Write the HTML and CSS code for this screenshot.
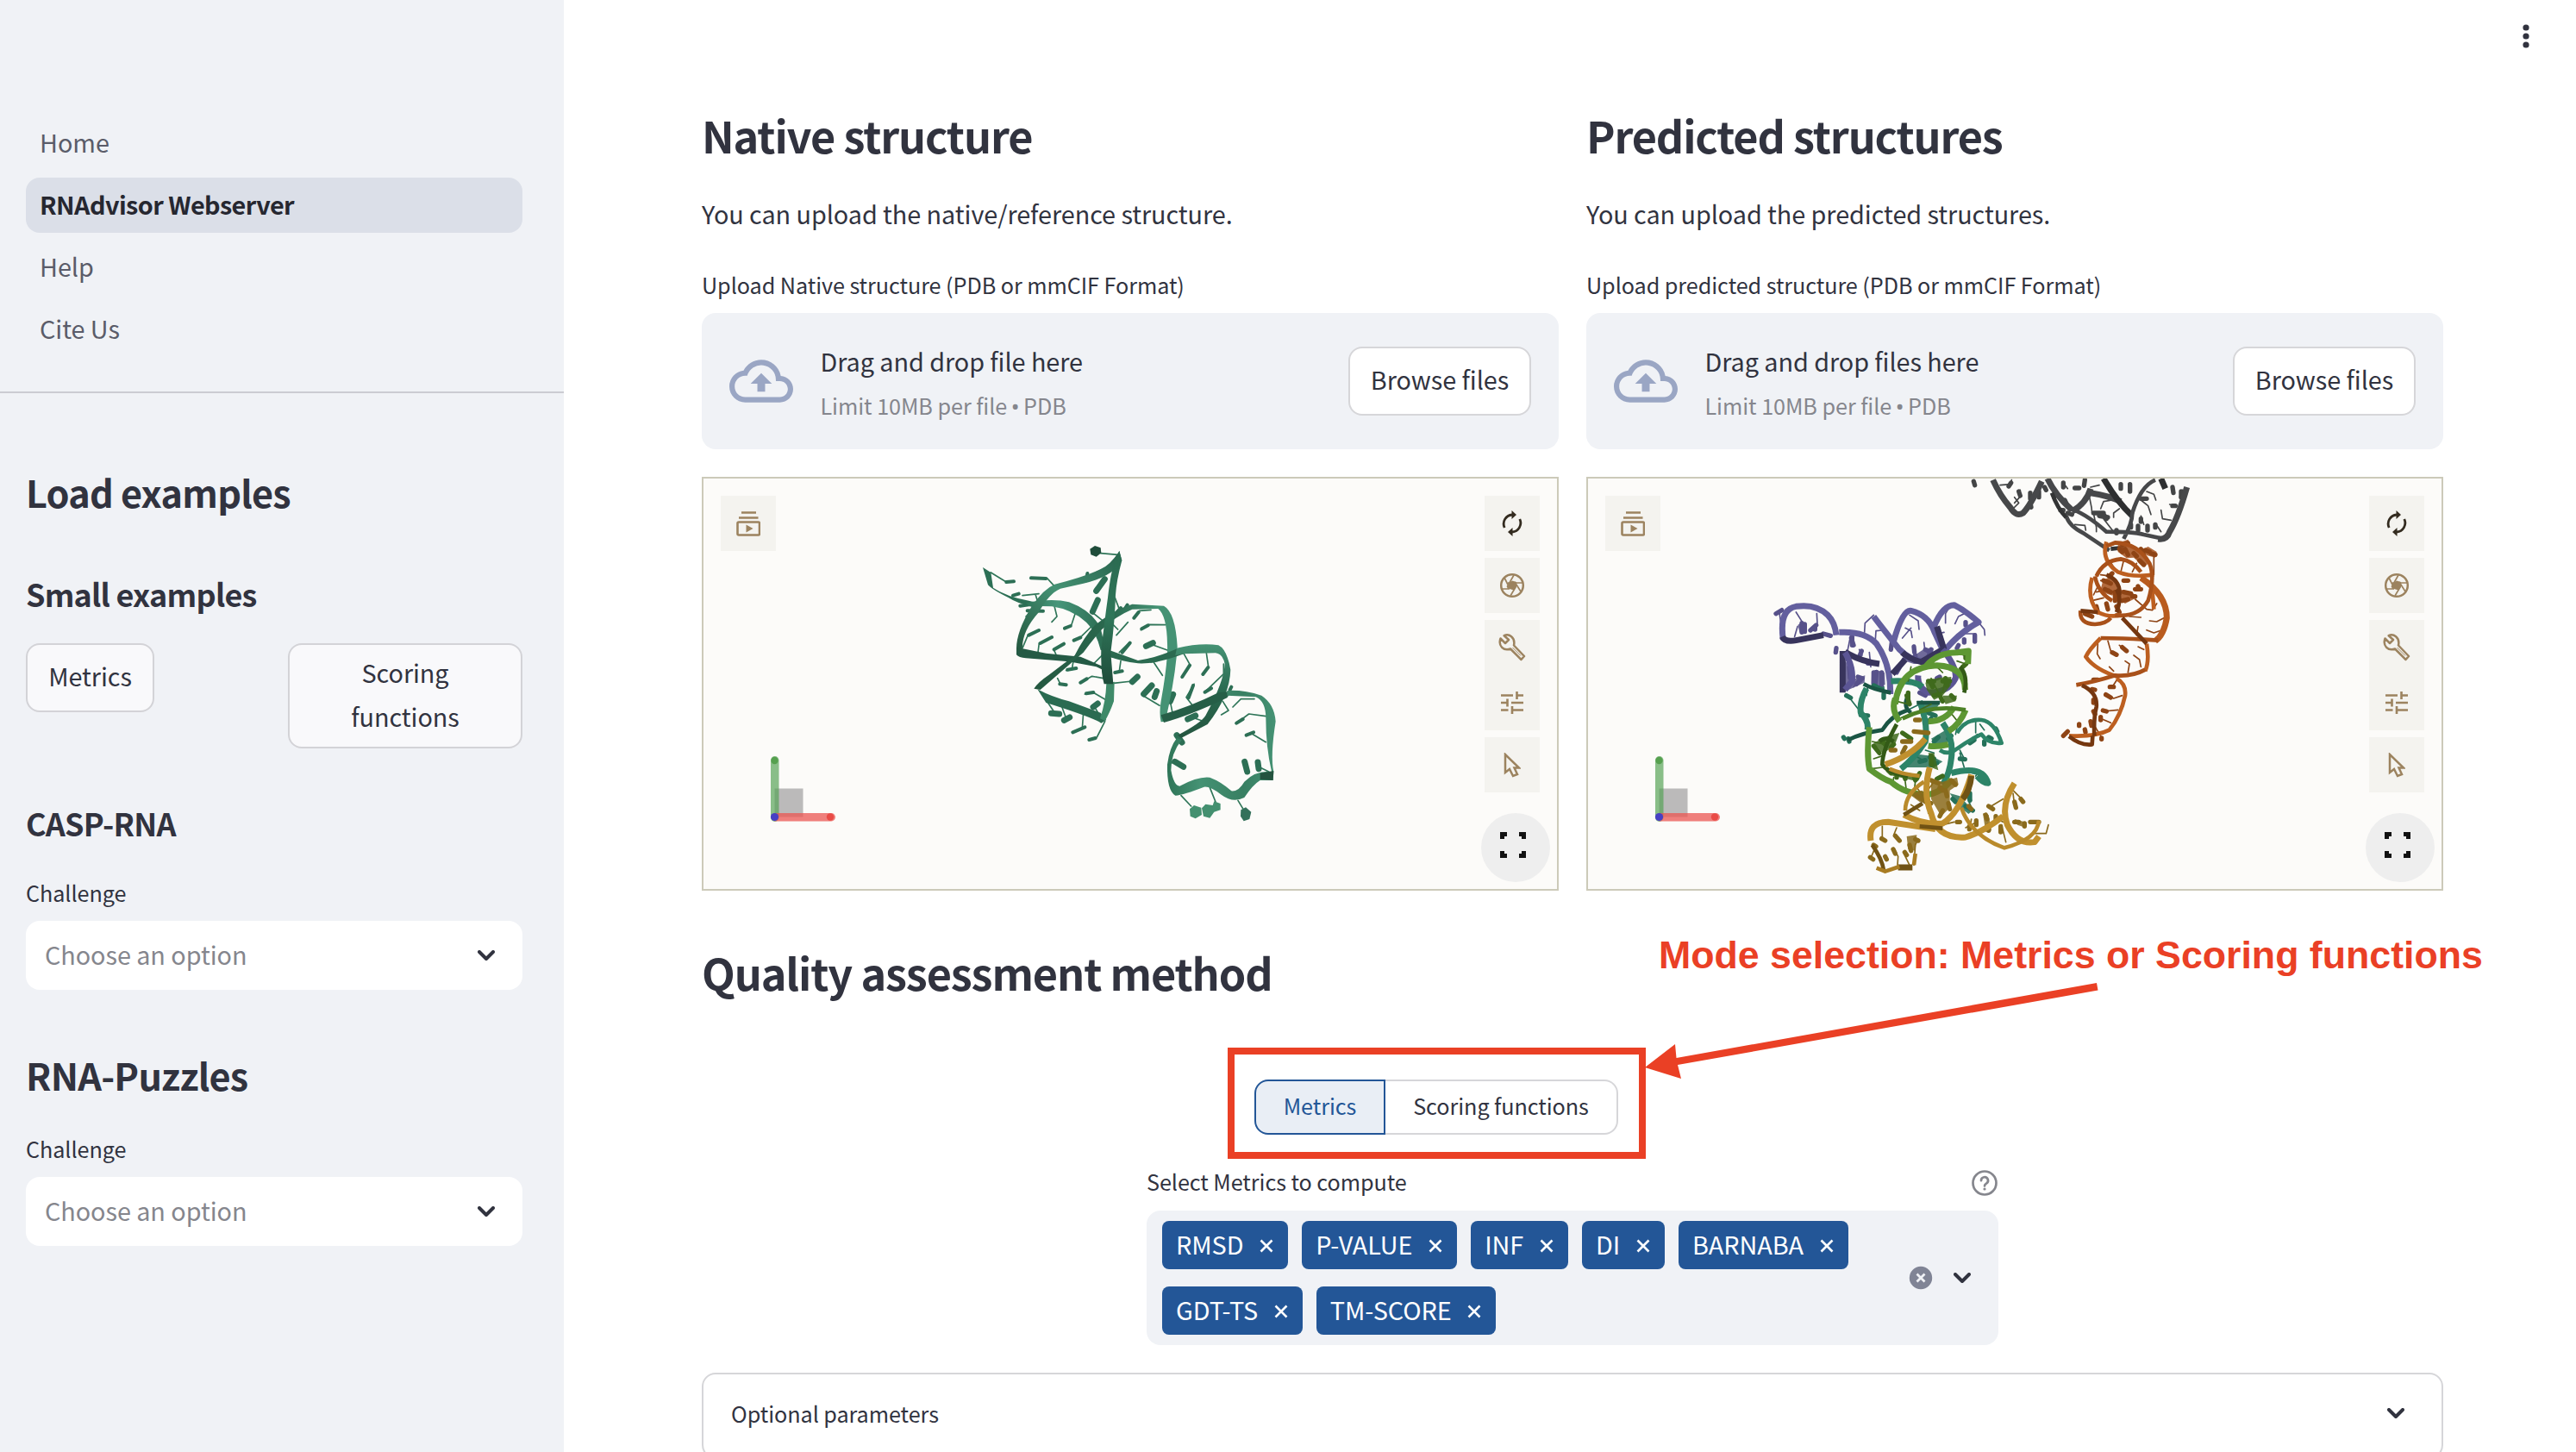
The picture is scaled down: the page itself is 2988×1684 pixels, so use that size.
FILE: index.html
```html
<!DOCTYPE html>
<html lang="en">
<head>
<meta charset="utf-8">
<title>RNAdvisor Webserver</title>
<link rel="stylesheet" href="styles.css">
</head>
<body>
<svg class="defs" width="0" height="0">
  <symbol id="chev" viewBox="0 0 20 12"><path d="M2 2l8 8 8-8" fill="none" stroke="#31333f" stroke-width="4" stroke-linecap="round" stroke-linejoin="round"/></symbol>
  <symbol id="cross" viewBox="0 0 16 16"><path d="M1.5 1.5l13 13M14.5 1.5l-13 13" fill="none" stroke="#fff" stroke-width="2.6"/></symbol>
  <symbol id="cloud" viewBox="0 0 24 16"><path fill="#9aa6c4" d="M19.35 6.04A7.49 7.49 0 0 0 12 0C9.11 0 6.6 1.64 5.35 4.04A5.994 5.994 0 0 0 0 10c0 3.310 2.690 6 6 6h13c2.760 0 5-2.240 5-5 0-2.640-2.050-4.780-4.650-4.960zM19 14H6c-2.210 0-4-1.790-4-4s1.790-4 4-4h.71A5.500 5.500 0 0 1 17.500 7.500V8H19c1.660 0 3 1.340 3 3s-1.340 3-3 3zM8 9h2.550v3h2.900V9H16l-4-4z"/></symbol>
  <symbol id="stack" viewBox="0 0 28 29"><g fill="none" stroke="#9c835f" stroke-width="2.600"><path d="M6 1.500h17M3 7.500h22.500"/><rect x="1.500" y="12.500" width="25.500" height="15" rx="1.500"/></g><path fill="#9c835f" d="M11.500 15.500v9l8-4.500z"/></symbol>
  <symbol id="sync" viewBox="0 0 24 30"><g fill="none" stroke="#332b1f" stroke-width="2.800"><path d="M3.200 20A10.500 10.500 0 0 1 12 5"/><path d="M20.800 10A10.500 10.500 0 0 1 12 25"/></g><path fill="#332b1f" d="M11.500 0v10l5.500-5zM12.500 20v10L7 25z"/></symbol>
  <symbol id="aperture" viewBox="0 0 30 30"><circle cx="15" cy="15" r="12.800" fill="none" stroke="#9c835f" stroke-width="2.500"/><path d="M11 12l4-2.500 5 1.500v6l-3 3.500-5-1.500-2-3z" fill="#9c835f"/><path d="M11 19l-1.500-3L17 3M10 12h17M18 11l7 11M19 17l-6 10M12 19H3M12 18L6 6" fill="none" stroke="#9c835f" stroke-width="1.700"/></symbol>
  <symbol id="wrench" viewBox="0 0 32 32"><path d="M2.500 5.500L8 11l4-4-5.300-4.800C12-.5 20 4 18 13.500L30 26l-3.500 4L14 17.500C6 20.500-.5 14 2.500 5.500z" fill="none" stroke="#9c835f" stroke-width="2.500" stroke-linejoin="round"/><path d="M16.500 16L26 25.500" stroke="#9c835f" stroke-width="1"/></symbol>
  <symbol id="tune" viewBox="0 0 26 26"><path d="M0 4.500h14M18 4.500h8M18.500 0v9M0 13h8M12 13h14M7.500 8.500v9M0 21.500h8.500M13 21.500h13M13 17v9" fill="none" stroke="#9c835f" stroke-width="2.600"/></symbol>
  <symbol id="pointer" viewBox="0 0 20 29"><path d="M2 2v21l5-4 4 8 5-2-3.500-7.500H18z" fill="none" stroke="#9c835f" stroke-width="2.500"/></symbol>
  <symbol id="full" viewBox="0 0 30 30"><path d="M0 0h8v5H5v3H0zM22 0h8v8h-5V5h-3zM0 22h5v3h3v5H0zM25 22h5v8h-8v-5h3z" fill="#111"/></symbol>
  <symbol id="axes" viewBox="0 0 78 78"><rect x="6.500" y="38.500" width="33" height="33" fill="#aaa" fill-opacity=".8"/><rect x="2" y="1" width="9.500" height="76" rx="4.700" fill="#53a052" fill-opacity=".68"/><circle cx="6.500" cy="6" r="4.200" fill="#4e9b45" fill-opacity=".85"/><rect x="3" y="67" width="74" height="9.500" rx="4.700" fill="#eb5552" fill-opacity=".75"/><circle cx="71" cy="71.500" r="4.200" fill="#e94b46"/><circle cx="6.500" cy="71.500" r="4.600" fill="#4740c4"/></symbol>
</svg>
<div class="app">
  <aside class="sidebar">
    <nav class="nav">
      <a class="nav-item">Home</a>
      <a class="nav-item active">RNAdvisor Webserver</a>
      <a class="nav-item">Help</a>
      <a class="nav-item">Cite Us</a>
    </nav>
    <div class="side-body">
      <h2 class="side-h2">Load examples</h2>
      <h3 class="side-h3 small-ex">Small examples</h3>
      <div class="example-buttons">
        <button class="btn">Metrics</button>
        <button class="btn wide">Scoring functions</button>
      </div>
      <h3 class="side-h3 casp">CASP-RNA</h3>
      <div class="label side-label">Challenge</div>
      <div class="select"><span>Choose an option</span><svg class="chev"><use href="#chev"/></svg></div>
      <h2 class="side-h2 puzzles">RNA-Puzzles</h2>
      <div class="label side-label">Challenge</div>
      <div class="select"><span>Choose an option</span><svg class="chev"><use href="#chev"/></svg></div>
    </div>
  </aside>
  <main class="main">
    <div class="columns">
      <section class="col">
        <h1 class="title">Native structure</h1>
        <p class="text">You can upload the native/reference structure.</p>
        <div class="label">Upload Native structure (PDB or mmCIF Format)</div>
        <div class="dropzone">
          <svg class="cloud"><use href="#cloud"/></svg>
          <div class="drop-text"><div class="drop-main">Drag and drop file here</div><div class="drop-sub">Limit 10MB per file <span class="dot">•</span> PDB</div></div>
          <button class="browse">Browse files</button>
        </div>
        <div class="viewer">
          <svg class="scene" viewBox="0 0 990 476">
            <g transform="translate(264 45) scale(.33333)" stroke-linejoin="round" stroke-linecap="round">
              <path class="g-stick" d="M208 192L258 223L290 223M405 213L428 238M363 268L370 290M318 272L375 266M428 305L438 345L420 364M502 333L488 376L463 388M318 455L337 410M372 470L376 438L400 430M438 485L428 462M560 378L525 412M560 330L600 362M650 390L625 365M685 365L645 410M815 374L758 373L730 392M765 322L725 325L705 350M822 462L770 443M655 470L690 435M880 475L902 515L872 558M957 465L965 520L945 548M1018 510V545L950 610M1015 640L1035 672L1010 687M1125 632H1078L1050 660M1165 692L1106 684L1060 718M1165 782L1120 755M840 680L832 640M910 655L888 626L915 580M950 710L915 698M795 655L740 622M635 577L700 570M610 636L565 610L535 615M600 560L560 553L518 577M440 560L450 580M400 635L425 672M452 650L470 700M530 680L526 735M605 710L577 765M572 665L590 695M835 855L850 853M1175 885L1140 868M870 968L905 1005M970 940L990 990M1068 985L1088 1018M590 125L650 130M495 500L490 530L470 533M660 500L655 535M640 280L655 320M775 505L805 550M565 510L595 480M345 330L330 345"/>
              <path class="g-slab" d="M348 211L400 213M262 225L288 223M285 272L305 266M310 308L345 303M335 325L390 326M340 410L375 393M380 438L420 417M428 460L462 440M497 428L520 418M465 386L485 378M540 220L544 195M645 332L660 315M672 322L683 305M733 388L755 376M706 350L722 330M665 470L692 437M874 555L900 515M946 546L964 522M953 608L975 595M1063 716L1085 702M1097 758L1122 748M896 628L912 585M520 575L542 562M540 613L565 609M448 580L470 583M493 748L535 730M550 774L572 768M640 540L665 535M765 500L790 495M475 530L505 525M1045 590L1040 600"/>
              <path class="g-slab big" d="M575 256L604 215M562 328L580 288M748 448L772 437M832 640L842 616M893 702L920 690M740 615L768 585M778 625L785 605M700 572L718 555M418 682L446 684M463 706L482 696M564 660L580 648M855 758L873 783M848 850L878 868M1091 850L1100 885M1137 852L1140 875"/>
              <path fill="#2c6f55" d="M180 174L208 192L216 245Q260 275 340 290L380 300L360 314Q300 300 270 280Q210 250 198 235Z"/>
              <path fill="#245a45" d="M297 452V478Q305 488 330 490L480 502L575 520L600 532L600 520L520 485L400 473Z"/>
              <path fill="url(#gA)" d="M330 298Q420 280 480 295Q560 325 590 385Q600 430 608 465L590 462Q575 400 540 365Q490 320 420 310L340 308Z"/>
              <path fill="url(#gB)" d="M655 118Q620 170 590 180Q540 205 430 233Q390 250 350 310Q295 400 297 462L318 466Q312 400 375 330Q410 265 450 248L530 230Q600 215 640 180L664 150Z"/>
              <path fill="#2a6b51" d="M370 598Q420 625 480 640L590 680L610 705L592 716Q560 695 400 645Z"/>
              <path fill="#3f8a69" d="M638 572L636 640Q620 685 605 708L588 700Q608 640 610 578Z"/>
              <path fill="url(#gC)" d="M500 480Q530 420 570 375Q640 320 700 302L810 308Q850 330 857 450Q850 560 815 710L800 712Q793 680 800 640Q825 500 822 440Q820 340 790 318L700 320Q640 345 592 392Q560 430 530 470L380 600L358 596Q370 575 410 548Z"/>
              <path fill="#2b6a50" d="M620 462L720 498Q780 490 860 455L880 475Q780 512 720 508Q660 500 620 485Z"/>
              <path fill="url(#gD)" d="M855 455Q940 435 1000 445Q1030 460 1042 530Q1040 620 962 720L870 768L858 758Q940 715 955 690Q1020 570 1022 510Q1015 475 990 472L880 475L850 480Z"/>
              <path fill="#265e47" d="M800 688Q900 660 1000 610L1045 605L1030 628Q900 690 810 714Z"/>
              <path fill="url(#gE)" d="M1030 603Q1090 600 1150 620Q1195 650 1199 710Q1180 830 1192 885L1190 915L1145 915Q1120 930 1090 975Q1050 995 1010 965Q970 935 950 938Q880 965 850 968Q820 950 822 860Q830 800 855 768L872 775Q835 820 835 880Q845 935 865 935Q930 900 970 905Q1010 920 1045 952Q1070 955 1090 920Q1130 880 1185 885Q1165 800 1165 700Q1165 640 1130 625L1030 620Z"/>
              <path fill="#24533f" d="M1145 890L1192 882L1190 915L1145 912Z"/>
              <path fill="url(#gF)" d="M655 116L664 150Q645 220 642 270Q640 360 625 470L634 580H602Q590 540 592 460Q605 350 615 280Q625 190 640 150Z"/>
              <path fill="#1f4c3a" d="M553 110L570 99L590 106L592 124L575 137L556 130Z"/>
              <path fill="#449070" d="M900 1015L915 1002L940 1010L942 1035L920 1048L902 1040ZM942 1012L955 998L980 1002L985 988L1007 996V1018L985 1025L970 1046L948 1040Z"/>
              <path fill="#33705a" d="M1078 1018L1095 1009L1114 1025L1108 1050L1088 1057L1077 1040Z"/>
            </g>
            <defs>
              <linearGradient id="gA"><stop offset="0" stop-color="#2f7659"/><stop offset=".4" stop-color="#47967a"/><stop offset="1" stop-color="#2a6a50"/></linearGradient>
              <linearGradient id="gB" x1="1" x2="0" y1="0" y2="1"><stop offset="0" stop-color="#26604a"/><stop offset=".5" stop-color="#459274"/><stop offset="1" stop-color="#24573f"/></linearGradient>
              <linearGradient id="gC"><stop offset="0" stop-color="#24573f"/><stop offset=".55" stop-color="#2b6a50"/><stop offset=".85" stop-color="#459274"/><stop offset="1" stop-color="#459274"/></linearGradient>
              <linearGradient id="gD" x2="0" y2="1"><stop offset="0" stop-color="#459274"/><stop offset=".5" stop-color="#2a6a50"/><stop offset="1" stop-color="#245540"/></linearGradient>
              <linearGradient id="gE"><stop offset="0" stop-color="#2f7558"/><stop offset=".3" stop-color="#459274"/><stop offset=".7" stop-color="#387f62"/><stop offset="1" stop-color="#459274"/></linearGradient>
              <linearGradient id="gF" x2="0" y2="1"><stop offset="0" stop-color="#2a6a50"/><stop offset=".5" stop-color="#2f7659"/><stop offset="1" stop-color="#1f4c3a"/></linearGradient>
            </defs>
            <use href="#axes" x="76" y="321" width="78" height="78"/>
          </svg>
          <div class="vbtn states"><svg width="28" height="29"><use href="#stack"/></svg></div>
          <div class="controls">
            <div class="vbtn"><svg width="24" height="30"><use href="#sync"/></svg></div>
            <div class="vbtn"><svg width="30" height="30"><use href="#aperture"/></svg></div>
            <div class="vgroup"><div class="vbtn"><svg width="32" height="32"><use href="#wrench"/></svg></div><div class="vbtn"><svg width="26" height="26"><use href="#tune"/></svg></div></div>
            <div class="vbtn"><svg width="20" height="29"><use href="#pointer"/></svg></div>
          </div>
          <div class="fullscreen"><svg width="30" height="30"><use href="#full"/></svg></div>
        </div>
      </section>
      <section class="col">
        <h1 class="title">Predicted structures</h1>
        <p class="text">You can upload the predicted structures.</p>
        <div class="label">Upload predicted structure (PDB or mmCIF Format)</div>
        <div class="dropzone">
          <svg class="cloud"><use href="#cloud"/></svg>
          <div class="drop-text"><div class="drop-main">Drag and drop files here</div><div class="drop-sub">Limit 10MB per file <span class="dot">•</span> PDB</div></div>
          <button class="browse">Browse files</button>
        </div>
        <div class="viewer">
          <svg class="scene" viewBox="0 0 990 476">
            <g class="mol" transform="translate(198 -15) scale(.33333)">
              <!-- purple chain -->
              <g stroke="#57518a">
                <path class="blob" fill="#57518a" d="M300 680L328 705L325 745L370 730L368 755L335 770L300 785ZM393 725L410 712L438 720L440 762L415 770L392 760ZM470 735L505 670L550 655L580 635L608 635L600 690L540 690L510 680ZM136 555L150 543L165 560L158 585L142 580Z"/>
                <path class="thin" d="M72 512L78 555M130 510L152 545M202 515L204 550M125 595L135 560M368 580L370 548L400 520M405 620L408 575L430 573M500 600L530 565M525 520L555 540L558 570M510 565L530 575L534 598M650 548V515L665 490M683 550L695 525L715 515M765 545L785 570L787 590M715 585L755 585M752 590V615M540 625L545 650M575 615L578 640M620 585L645 580M320 590L310 640M350 640L360 660M390 700L385 650M555 770L560 740M330 770L345 745"/>
                <path class="slab" d="M60 515L80 503M150 548V580M160 552V578M180 573L200 555M196 560V570M225 585L250 592M270 635L268 650M325 595V625M322 600L330 625M358 645L350 665M380 688H395M400 720V760M410 718L405 765M428 720V765M345 735L360 740M340 760L355 745M315 700L318 740M465 600L460 640M480 720L505 675M545 660V680M600 640L590 665M580 640L600 650M720 545V555M690 635L695 625M715 605V615M752 590V612M560 790L580 800M620 740L630 735M540 630L542 650"/>
                <path class="rib" stroke="#635f9e" d="M85 605Q70 500 130 490Q200 480 240 520Q265 545 270 590M280 580Q370 575 410 620Q460 690 458 795M400 525Q430 565 490 640Q530 680 570 680M470 610Q500 500 530 505Q590 520 610 575L640 640M610 560Q640 485 680 485Q720 505 765 545Q700 580 650 640"/>
                <path class="rib" stroke="#38345c" d="M82 595Q90 615 130 608L225 590M292 645V790M300 648Q350 680 420 690M465 725L510 675M570 680L640 640M620 560L645 640M600 690Q530 680 500 650"/>
                <path class="rib" stroke="#5b5594" d="M640 640Q690 700 685 740Q660 790 590 790Q550 770 555 730M300 650Q330 700 325 750L300 780"/>
              </g>
              <!-- teal chain -->
              <g stroke="#247058">
                <path class="blob" fill="#247058" d="M495 1050L560 1005L600 1010L640 1030L610 1050L550 1050ZM548 820L635 820L615 850L580 860ZM600 950L650 920L665 960L620 975ZM665 1140L700 1150L745 1200L730 1212L690 1180Z"/>
                <path class="thin" d="M310 800L345 845M435 770V800M380 765L375 800M520 850L560 830M690 910L685 935M755 890V930M770 900L785 920M740 965L760 935M785 960L800 945M700 990L715 1020M700 1000L715 1050M770 1060L755 1080M545 1010L580 1030M610 1000L580 990M720 1140L740 1190M735 1145L740 1165"/>
                <path class="slab" d="M305 800L320 808M435 795V808M355 868L380 870M295 945L298 950M315 960L312 950M400 765L430 780M735 965L750 955M785 960V970M800 945L810 950M825 915L830 925M700 1020L718 1022M595 1015L610 1020M560 1030L580 1025M600 1040L620 1035M720 1185L745 1200M675 1160L685 1170M735 1140V1165M610 960L625 945M590 860L615 870M580 900L600 880M660 950L670 940"/>
                <path class="rib" stroke="#2d8468" d="M460 750Q540 745 570 770M375 775Q350 820 355 860Q385 890 378 920M560 820Q590 900 580 960Q540 1020 495 1055M640 895Q680 950 670 1020Q665 1070 640 1110M670 1070Q780 1040 798 1105Q780 1105 760 1080"/>
                <path class="rib narrow" stroke="#2d8468" d="M690 930Q720 880 775 885Q820 890 845 965Q800 970 775 935Q740 950 690 985Q660 1010 630 990"/>
                <path class="rib narrow" stroke="#1b5544" d="M365 760Q400 780 460 790M310 955Q360 930 430 920Q460 870 520 850M550 825H630M520 800Q500 840 530 860"/>
              </g>
              <!-- green chain -->
              <g stroke="#3f6a1c">
                <path class="blob" fill="#3f6a1c" d="M580 755L625 738L670 735L668 765L640 800L610 815L585 780ZM400 965L450 940L490 930L470 980L430 1000ZM640 800L690 800L685 820L650 830ZM445 1055L510 1068L565 1075L550 1098L460 1078ZM590 1000L610 1000L625 1060L600 1050Z"/>
                <path class="thin" d="M680 650L715 660M720 690L690 680M600 740L625 790M650 740L640 790M480 820L520 830M490 880L540 860M395 960L440 970M400 1020L430 1010M390 1055L430 1050M510 1100L515 1140M470 1085L465 1110M700 900L660 850M545 1100L540 1140M560 850L600 830M530 700L520 750M620 700L640 720"/>
                <path class="slab" d="M720 655V670M722 690L710 700M590 750H610M600 760L605 770M640 750H665M650 740L655 765M610 800L630 795M630 800L640 820M670 800L680 810M520 790V820M515 800L525 830M420 1000L400 975M430 960L440 970M450 1060L460 1070M480 1070V1085M505 1075L510 1090M540 1080L545 1095M560 1070L550 1090M600 1010V1040M460 980L470 970M640 1080L620 1090M500 930L530 950M670 1100L650 1110"/>
                <path class="rib" stroke="#5d9733" d="M580 700Q620 650 690 650L730 645L728 690M475 830Q490 700 620 695Q720 700 718 780M720 850Q700 900 660 925M490 890Q460 850 475 810M385 910Q375 1000 385 1055Q430 1090 460 1100Q510 1145 590 1145Q650 1130 670 1090M660 970Q620 980 590 975M590 890Q650 890 680 840"/>
                <path class="rib narrow" stroke="#4d8127" d="M500 880Q600 830 720 850"/>
                <path class="rib narrow" stroke="#335a17" d="M480 900Q430 990 430 1040Q450 1070 520 1080M470 960Q440 940 420 960M700 700Q730 730 715 790"/>
              </g>
              <!-- gold chain -->
              <g stroke="#8a6a1c">
                <path class="blob" fill="#8a6a1c" d="M600 1090L640 1100L690 1085L695 1110L665 1130L665 1190L635 1220L600 1160ZM520 1140L570 1130L600 1180L560 1170ZM515 1290L550 1285L545 1340L520 1335ZM780 1210L800 1215L810 1270L790 1275ZM890 1230L925 1240L930 1260L900 1250Z"/>
                <path class="thin" d="M430 1255V1300M480 1260L470 1285L490 1305M470 1330L485 1360L483 1390M505 1350L525 1390M390 1365L405 1330M540 1390L545 1320L555 1300M800 1190L850 1160M885 1130L915 1160M885 1140L890 1180M845 1250L860 1310M680 1240L640 1250M735 1260L740 1230M760 1240L720 1260M960 1280L1000 1280L1008 1250M830 1230L850 1240M550 1120L600 1190M530 1180L560 1200M590 1160L590 1210M610 1100L580 1140"/>
                <path class="slab" d="M428 1298L440 1305M475 1288L490 1305M468 1335L475 1350M440 1360L445 1370M400 1320L408 1325M388 1363L398 1370M508 1345L515 1355M525 1320L530 1340M545 1300L555 1305M800 1185L815 1195M912 1160L920 1170M890 1170L895 1190M842 1255V1275M690 1240H700M733 1255V1265M757 1235V1250M790 1215L795 1230M800 1250V1270M825 1220V1230M890 1240H905M925 1245V1255M945 1240H975M600 1095L625 1105M630 1120L640 1130M670 1095L685 1110M650 1130L655 1150M730 1185L740 1195M660 1175L665 1195M580 1170L600 1175M550 1150L575 1165M640 1200L630 1220M460 990H475M500 960H530M540 925L590 930M545 885H560M500 1000L510 980"/>
                <path class="rib" stroke="#c0902e" d="M440 1040Q530 1010 580 950M390 1305Q380 1240 450 1240Q550 1255 615 1265M505 1215Q570 1250 640 1245Q700 1210 740 1075M595 1050Q570 1140 600 1210Q620 1300 720 1293Q780 1275 850 1220M890 1105Q840 1180 865 1250Q900 1320 960 1310L975 1290"/>
                <path class="rib narrow" stroke="#b98a2b" d="M510 1200Q510 1140 575 1100M455 1055Q500 1075 560 1080M705 1190Q740 1290 855 1330Q970 1300 975 1235"/>
                <path class="rib" stroke="#705214" d="M485 1398H535M740 1080Q735 1130 710 1160"/>
                <path class="rib narrow" stroke="#705214" d="M395 1320Q430 1370 435 1408M560 1255L640 1262M505 1215L570 1175"/>
                <path class="rib narrow" stroke="#a97c22" d="M410 1400L440 1412L490 1395M540 1390L545 1350"/>
              </g>
            </g>
            <g class="mol" transform="translate(498 -15) scale(.33333)">
              <!-- grey chain -->
              <g stroke="#444546">
                <path class="thin" d="M-60 68L-24 65L-20 50M-10 110L5 130L-15 150M10 85L8 110L-10 130M160 60L175 80M255 75L285 68M250 105L258 145L260 165M290 150L300 125L330 120M335 180V165L355 150M265 165L275 215L275 230M300 185L335 230M430 120L455 140L465 170M450 90L475 100L482 120M500 155L505 185L535 190M575 85L565 110M530 135L555 140M480 200L500 230M430 175L440 205M200 205L235 208L238 225"/>
                <path class="slab" d="M-152 55L-148 68M-30 72L-22 60M5 90L10 105M45 95V115M75 90V110M45 130L48 145M100 85L95 75M130 95L128 110M160 60V75M200 78H215M235 50L232 70M360 65V80M392 65V90M265 165H300M285 175L315 180M300 168L310 185M430 115H450M420 210V225M453 210V225M480 205V215M430 185V195M395 205V215M150 155H160M175 165L190 170M165 120L170 130M540 75L543 95M570 90V110M345 225V235M540 140H550"/>
                <path class="rib" stroke="#47484a" d="M-85 50Q-60 105 -25 145Q-5 180 20 165Q45 140 85 55M105 45Q130 100 190 155M190 160Q240 130 255 80M255 95Q320 105 360 125M590 75Q560 180 530 230Q520 260 490 255"/>
                <path class="rib" stroke="#2e2f30" d="M300 45Q350 130 400 175M500 45L515 80"/>
                <path class="rib narrow" stroke="#47484a" d="M370 255Q400 200 400 165Q430 70 480 50M170 175Q180 210 230 235L320 295M180 150Q230 160 310 230Q400 230 440 240L510 255"/>
                <path class="rib narrow" stroke="#333435" d="M120 95Q140 150 170 180M325 290L370 285"/>
              </g>
              <!-- orange chain -->
              <g stroke="#8e4415">
                <path class="blob" fill="#a34f1b" d="M350 270L385 257L400 285L440 295L458 340L440 352L405 320L380 322L350 300ZM437 290L455 282L485 300L480 320L450 312ZM298 400L325 385L340 400L350 435L330 452L288 438ZM360 432L400 440L415 460L375 480L352 465Z"/>
                <path class="thin" d="M320 280L350 270M360 370L370 330M400 370L415 340M340 360L320 330M330 385L290 380M475 380V310M280 420L265 450M300 460L260 470M410 465L450 500L470 503L485 480M390 525L430 528M460 540L485 543L510 530M450 572L475 582L510 570M315 610L325 645L345 660M280 620L278 655L288 672M355 625L380 645M420 630L440 640M405 660L425 675L430 700M375 680L390 690L385 720M320 700L335 715M350 740L330 770M305 795L335 810L365 800M300 855L350 850M290 880L325 895M265 900L290 940M415 590L420 560M290 400H320M275 440L320 430"/>
                <path class="slab" d="M365 275L385 270M375 290L385 310M405 305L415 315M430 290L440 310M425 330L440 345M445 295L460 300M465 305L480 310M370 400H385M410 430L430 430M420 420L425 430M300 400L325 410M305 430L325 440M370 440L395 445M400 455H410M340 440V470M345 490L355 510M310 480L315 500M275 490L280 510M235 515L260 525M330 650L345 658M365 632L380 645M322 770H335M308 797L325 807M265 745H280M260 778L270 780M265 815V825M265 855L270 865M298 852L310 855M290 875V885M255 890L258 905M215 900V905M235 918L237 928M293 948V952M160 940L175 925M355 290L365 300M320 385L330 375M365 470L385 465"/>
                <path class="rib narrow" stroke="#bd5f20" d="M310 265Q290 330 350 370Q400 390 475 380M260 390Q240 460 280 510Q320 530 360 520M475 500Q470 420 460 400M290 600Q250 640 238 665Q270 710 350 735M450 620Q460 680 445 715M345 740Q380 760 375 800Q360 870 320 920Q270 945 180 940"/>
                <path class="rib" stroke="#b95c1f" d="M430 390Q520 450 520 530Q510 590 480 610"/>
                <path class="rib narrow" stroke="#a9511a" d="M270 385Q280 440 330 470M220 505Q215 550 270 552Q310 550 325 530M340 520Q420 530 455 470Q480 390 460 340Q420 270 340 268L310 280M275 385Q300 330 360 325Q400 330 430 370M205 763Q260 755 340 730Q400 735 445 710M290 600Q370 600 440 605L490 608"/>
                <path class="rib narrow" stroke="#753710" d="M365 530L450 620M220 505L280 510M345 430Q365 460 345 510M310 380Q360 400 355 450M225 765Q280 790 275 840Q265 880 268 940M180 942Q220 975 260 970L262 940"/>
              </g>
            </g>
            <use href="#axes" x="76" y="321" width="78" height="78"/>
          </svg>
          <div class="vbtn states"><svg width="28" height="29"><use href="#stack"/></svg></div>
          <div class="controls">
            <div class="vbtn"><svg width="24" height="30"><use href="#sync"/></svg></div>
            <div class="vbtn"><svg width="30" height="30"><use href="#aperture"/></svg></div>
            <div class="vgroup"><div class="vbtn"><svg width="32" height="32"><use href="#wrench"/></svg></div><div class="vbtn"><svg width="26" height="26"><use href="#tune"/></svg></div></div>
            <div class="vbtn"><svg width="20" height="29"><use href="#pointer"/></svg></div>
          </div>
          <div class="fullscreen"><svg width="30" height="30"><use href="#full"/></svg></div>
        </div>
      </section>
    </div>
    <h1 class="title quality">Quality assessment method</h1>
    <div class="method">
      <div class="segmented"><button class="seg on">Metrics</button><button class="seg">Scoring functions</button></div>
      <div class="metric-label"><span class="label">Select Metrics to compute</span>
        <svg class="help" width="32" height="32" viewBox="0 0 32 32"><g fill="none" stroke="#85868d" stroke-width="2.700"><circle cx="16" cy="16" r="13.500"/><path d="M12 13.200a4 4 0 1 1 6 3.400c-1.500.9-2 1.500-2 2.900" stroke-linecap="round"/></g><circle cx="16" cy="23" r="1.600" fill="#85868d"/></svg>
      </div>
      <div class="multiselect">
        <div class="tags">
          <span class="tag">RMSD<svg><use href="#cross"/></svg></span><span class="tag">P-VALUE<svg><use href="#cross"/></svg></span><span class="tag">INF<svg><use href="#cross"/></svg></span><span class="tag">DI<svg><use href="#cross"/></svg></span><span class="tag">BARNABA<svg><use href="#cross"/></svg></span><span class="tag">GDT-TS<svg><use href="#cross"/></svg></span><span class="tag">TM-SCORE<svg><use href="#cross"/></svg></span>
        </div>
        <div class="ms-icons">
          <svg width="28" height="28" viewBox="0 0 28 28"><circle cx="14" cy="14" r="13.200" fill="#808495"/><path d="M9.500 9.500l9 9M18.500 9.500l-9 9" stroke="#f0f2f6" stroke-width="2.800"/></svg>
          <svg class="chev"><use href="#chev"/></svg>
        </div>
      </div>
    </div>
    <div class="expander"><span>Optional parameters</span><svg class="chev"><use href="#chev"/></svg></div>
  </main>
  <svg class="kebab" width="8" height="28" viewBox="0 0 8 28" fill="#31333f"><circle cx="4" cy="4" r="3.600"/><circle cx="4" cy="14" r="3.600"/><circle cx="4" cy="24" r="3.600"/></svg>
  <div class="callout-box"></div>
  <svg class="callout-arrow" width="530" height="120" viewBox="0 0 530 120" fill="#ea4025"><path d="M3 98L38 71L39.500 87L527 0L528.500 8.500L41 95L45 111Z"/></svg>
  <div class="callout-text">Mode selection: Metrics or Scoring functions</div>
</div>
</body>
</html>
```
FILE: styles.css
```css
* { box-sizing: border-box; }
body { margin: 0; background: #fff; color: #31333f; font-family: "Noto Sans CJK SC", "Noto Sans", sans-serif; font-size: 28.8px; letter-spacing: -.06px; }
h1, h2, h3, p { margin: 0; font-weight: 700; letter-spacing: -.022em; }
button { font: inherit; letter-spacing: inherit; color: inherit; margin: 0; padding: 0; }
svg { display: block; flex: none; }
.defs { position: absolute; }
.app { position: relative; display: flex; width: 2988px; height: 1684px; overflow: hidden; }

.sidebar { width: 654px; flex: none; background: #f0f2f6; }
.nav { padding: 134px 48px 40px 30px; border-bottom: 2px solid #cbccd2; display: flex; flex-direction: column; gap: 8px; }
.nav-item { height: 64px; padding-left: 16px; border-radius: 16px; line-height: 61px; color: #5a5c69; white-space: nowrap; }
.nav-item.active { background: #dbdfe8; color: #262730; font-weight: 700; letter-spacing: -.02em; }
.side-body { padding: 84px 48px 0 30px; }
.side-h2 { font-size: 43.2px; line-height: 60px; letter-spacing: -.018em; }
.side-h3 { font-size: 36px; line-height: 50px; }
.small-ex { margin-top: 63px; }
.example-buttons { display: flex; justify-content: space-between; align-items: flex-start; margin-top: 33px; height: 122px; }
.btn { width: 149px; height: 80px; background: #f9f9fb; border: 2px solid #d3d3d7; border-radius: 16px; line-height: 51px; padding-bottom: 5px; }
.btn.wide { width: 272px; height: 122px; padding: 0 60px 5px; }
.casp { margin-top: 61px; margin-bottom: 36px; }
.puzzles { margin-top: 68px; margin-bottom: 36px; }
.label { font-size: 25.2px; line-height: 40px; white-space: nowrap; }
.select { margin-top: 13px; height: 80px; border-radius: 16px; background: #fff; color: #85868d; padding: 0 32px 0 22px; display: flex; align-items: center; justify-content: space-between; line-height: 78px; }
.select span { height: 80px; }
.chev { width: 20px; height: 12px; }

.main { flex: none; width: 2334px; padding: 122px 154px 0 160px; }
.columns { display: flex; gap: 32px; }
.col { width: 994px; }
.title { font-size: 50.4px; line-height: 70px; letter-spacing: -.0225em; white-space: nowrap; }
.text { font-weight: 400; line-height: 52px; margin-top: 30px; margin-bottom: 36px; letter-spacing: -.06px; white-space: nowrap; }
.dropzone { margin-top: 13px; height: 158px; border-radius: 16px; background: #f0f2f6; padding: 0 32px; display: flex; align-items: center; }
.cloud { width: 74px; height: 50px; }
.drop-text { margin-left: 31.5px; flex: 1; padding-top: 3px; }
.drop-main { line-height: 52px; }
.drop-sub { font-size: 25.2px; line-height: 50px; height: 50px; color: #85868d; }
.dot { font-family: "Noto Sans", sans-serif; font-size: 26px; line-height: 1; margin: 0 -1px; }
.browse { width: 212px; height: 80px; background: #fff; border: 2px solid #d6d6d9; border-radius: 16px; padding-bottom: 5px; }
.viewer { position: relative; margin-top: 32px; height: 480px; border: 2px solid #cccab9; background: #fcfbf9; }
.scene { display: block; width: 990px; height: 476px; }
.vbtn { width: 64px; height: 64px; background: #f4f3ef; display: flex; align-items: center; justify-content: center; }
.states { position: absolute; left: 20px; top: 20px; }
.controls { position: absolute; right: 20px; top: 20px; display: flex; flex-direction: column; gap: 8px; }
.fullscreen { position: absolute; right: 8px; bottom: 8px; width: 80px; height: 80px; border-radius: 50%; background: #eee; display: flex; align-items: center; justify-content: center; padding: 0 6px 6px 0; }
.g-stick { fill: none; stroke: #2f7558; stroke-width: 5; }
.g-slab { fill: none; stroke: #2d6f55; stroke-width: 12; }
.g-slab.big { stroke-width: 21; }
.mol { fill: none; stroke-linecap: round; stroke-linejoin: round; }
.mol .blob { stroke: none; fill-opacity: .85; }
.mol .thin { stroke-width: 5; }
.mol .slab { stroke-width: 16; }
.mol .rib { stroke-width: 21; stroke-linecap: butt; }
.mol .rib.narrow { stroke-width: 14; }

.quality { margin-top: 60px; }
.method { width: 988px; margin: 89px auto 0; }
.segmented { display: flex; width: 422px; height: 64px; margin-left: 125px; }
.seg { flex: 1; background: #fff; border: 2px solid #d6d6d9; border-left: 0; border-radius: 0 16px 16px 0; font-size: 25.2px; padding-bottom: 4px; }
.seg.on { flex: none; width: 152px; border: 2px solid #235697; border-radius: 16px 0 0 16px; background: #e9eef5; color: #235697; }
.metric-label { display: flex; justify-content: space-between; align-items: center; margin-top: 34px; height: 40px; }
.help { margin-top: 4px; }
.multiselect { margin-top: 14px; height: 156px; border-radius: 16px; background: #f0f2f6; display: flex; justify-content: space-between; align-items: center; padding: 0 32px 0 18px; }
.tags { display: flex; flex-wrap: wrap; gap: 20px 16px; width: 820px; }
.tag { display: flex; align-items: center; gap: 18.8px; height: 56px; padding: 0 17px 3px 16px; border-radius: 8px; background: #235697; color: #fff; line-height: 50px; }
.tag svg { width: 16px; height: 16px; margin-top: 4px; }
.ms-icons { display: flex; align-items: center; gap: 24px; }
.expander { margin-top: 32px; height: 100px; border: 2px solid #d6d6d9; border-radius: 16px; display: flex; align-items: center; justify-content: space-between; padding: 0 43px 6px 32px; font-size: 25.2px; }

.kebab { position: absolute; left: 2926px; top: 28px; }
.callout-box { position: absolute; left: 1424px; top: 1215px; width: 485px; height: 129px; border: 8px solid #ea4025; }
.callout-arrow { position: absolute; left: 1905px; top: 1140px; }
.callout-text { position: absolute; left: 1924px; top: 1081px; font: 700 44.7px/54px "Liberation Sans", sans-serif; letter-spacing: 0; color: #ea4025; white-space: nowrap; }
```
